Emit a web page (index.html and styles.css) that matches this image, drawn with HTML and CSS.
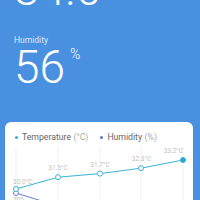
FILE: index.html
```html
<!DOCTYPE html>
<html>
<head>
<meta charset="utf-8">
<link rel="stylesheet" href="styles.css">
</head>
<body>
<main class="page">
  <section class="hero">
    <div class="value value-temp">34.0</div>
    <div class="label">Humidity</div>
    <div class="value-row">
      <span class="value">56</span><span class="unit">%</span>
    </div>
  </section>
  <section class="card">
    <div class="legend">
      <span class="legend-item"><i class="dot dot-temp"></i><span class="legend-name">Temperature</span><span class="legend-unit">(°C)</span></span>
      <span class="legend-item"><i class="dot dot-hum"></i><span class="legend-name">Humidity</span><span class="legend-unit">(%)</span></span>
    </div>
    <svg class="chart" width="188" height="99" viewBox="5 143 188 99">
      <g class="grid">
        <line x1="16" y1="147" x2="16" y2="242"/>
        <line x1="58" y1="147" x2="58" y2="242"/>
        <line x1="100" y1="147" x2="100" y2="242"/>
        <line x1="141" y1="147" x2="141" y2="242"/>
        <line x1="183" y1="147" x2="183" y2="242"/>
      </g>
      <polyline class="line-hum" points="16,193 58,206 100,214 141,220 183,226"/>
      <circle class="pt-hum" cx="16" cy="193" r="2.5"/>
      <text class="pt-label" x="13" y="202" text-anchor="start">70%</text>
      <polyline class="line-temp" points="16,189 58,177.2 100,173.6 141,168.2 183,160"/>
      <circle class="pt-temp" cx="16" cy="189" r="2.5"/>
      <circle class="pt-temp" cx="58" cy="177.2" r="2.5"/>
      <circle class="pt-temp" cx="100" cy="173.6" r="2.5"/>
      <circle class="pt-temp" cx="141" cy="168.2" r="2.5"/>
      <circle class="pt-temp pt-active" cx="183" cy="160" r="2.5"/>
      <text class="pt-label" x="13" y="183.5" text-anchor="start">30.0°C</text>
      <text class="pt-label" x="58" y="169.5" text-anchor="middle">31.3°C</text>
      <text class="pt-label" x="100" y="166.5" text-anchor="middle">31.7°C</text>
      <text class="pt-label" x="141.5" y="160.5" text-anchor="middle">32.3°C</text>
      <text class="pt-label" x="183" y="153" text-anchor="end">33.2°C</text>
    </svg>
  </section>
</main>
</body>
</html>
```

FILE: styles.css
```css
html, body {
  margin: 0;
  padding: 0;
}
body {
  background: #4a90e0;
  font-family: Roboto, "Noto Sans", "Liberation Sans", sans-serif;
  overflow: hidden;
  width: 200px;
  height: 200px;
}
.page {
  display: flex;
  flex-direction: column;
}
.hero {
  padding-left: 14px;
  color: #fff;
}
.value {
  font-size: 46px;
  font-weight: 300;
  line-height: 40px;
  color: #fff;
}
.value-temp {
  line-height: 46px;
  margin-top: -34px;
}
.label {
  margin-top: 23px;
  font-size: 8.5px;
  line-height: 10px;
  color: rgba(255, 255, 255, 0.82);
}
.value-row {
  display: flex;
  align-items: flex-start;
  margin-top: 2px;
}
.unit {
  font-size: 14px;
  line-height: 12px;
  font-weight: 300;
  margin-top: 1px;
  margin-left: 5px;
}
.card {
  margin: 35px 7px 0 5px;
  height: 120px;
  background: #fff;
  border-radius: 6px;
  display: flex;
  flex-direction: column;
}
.legend {
  display: flex;
  gap: 12px;
  padding: 9px 0 0 10px;
  font-size: 8.7px;
  line-height: 12px;
}
.legend-item {
  display: flex;
  align-items: center;
}
.dot {
  width: 3px;
  height: 3px;
  border-radius: 50%;
  margin-right: 4px;
}
.dot-temp { background: #2fb3d9; }
.dot-hum { background: #5a6fd1; }
.legend-name { color: #666; }
.legend-unit { color: #aaa; margin-left: 2.5px; }
.chart {
  display: block;
}
.grid line {
  stroke: #f0f0f0;
  stroke-width: 1;
}
.line-temp {
  fill: none;
  stroke: #3bb2d8;
  stroke-width: 1;
}
.line-hum {
  fill: none;
  stroke: #6b7fd6;
  stroke-width: 1;
}
.pt-temp {
  fill: #fff;
  stroke: #3bb2d8;
  stroke-width: 1;
}
.pt-active {
  fill: #2aa6cf;
}
.pt-hum {
  fill: #fff;
  stroke: #6b7fd6;
  stroke-width: 1;
}
.pt-label {
  font-family: Roboto, "Noto Sans", "Liberation Sans", sans-serif;
  font-size: 6.5px;
  fill: #c4c0bc;
}
```
